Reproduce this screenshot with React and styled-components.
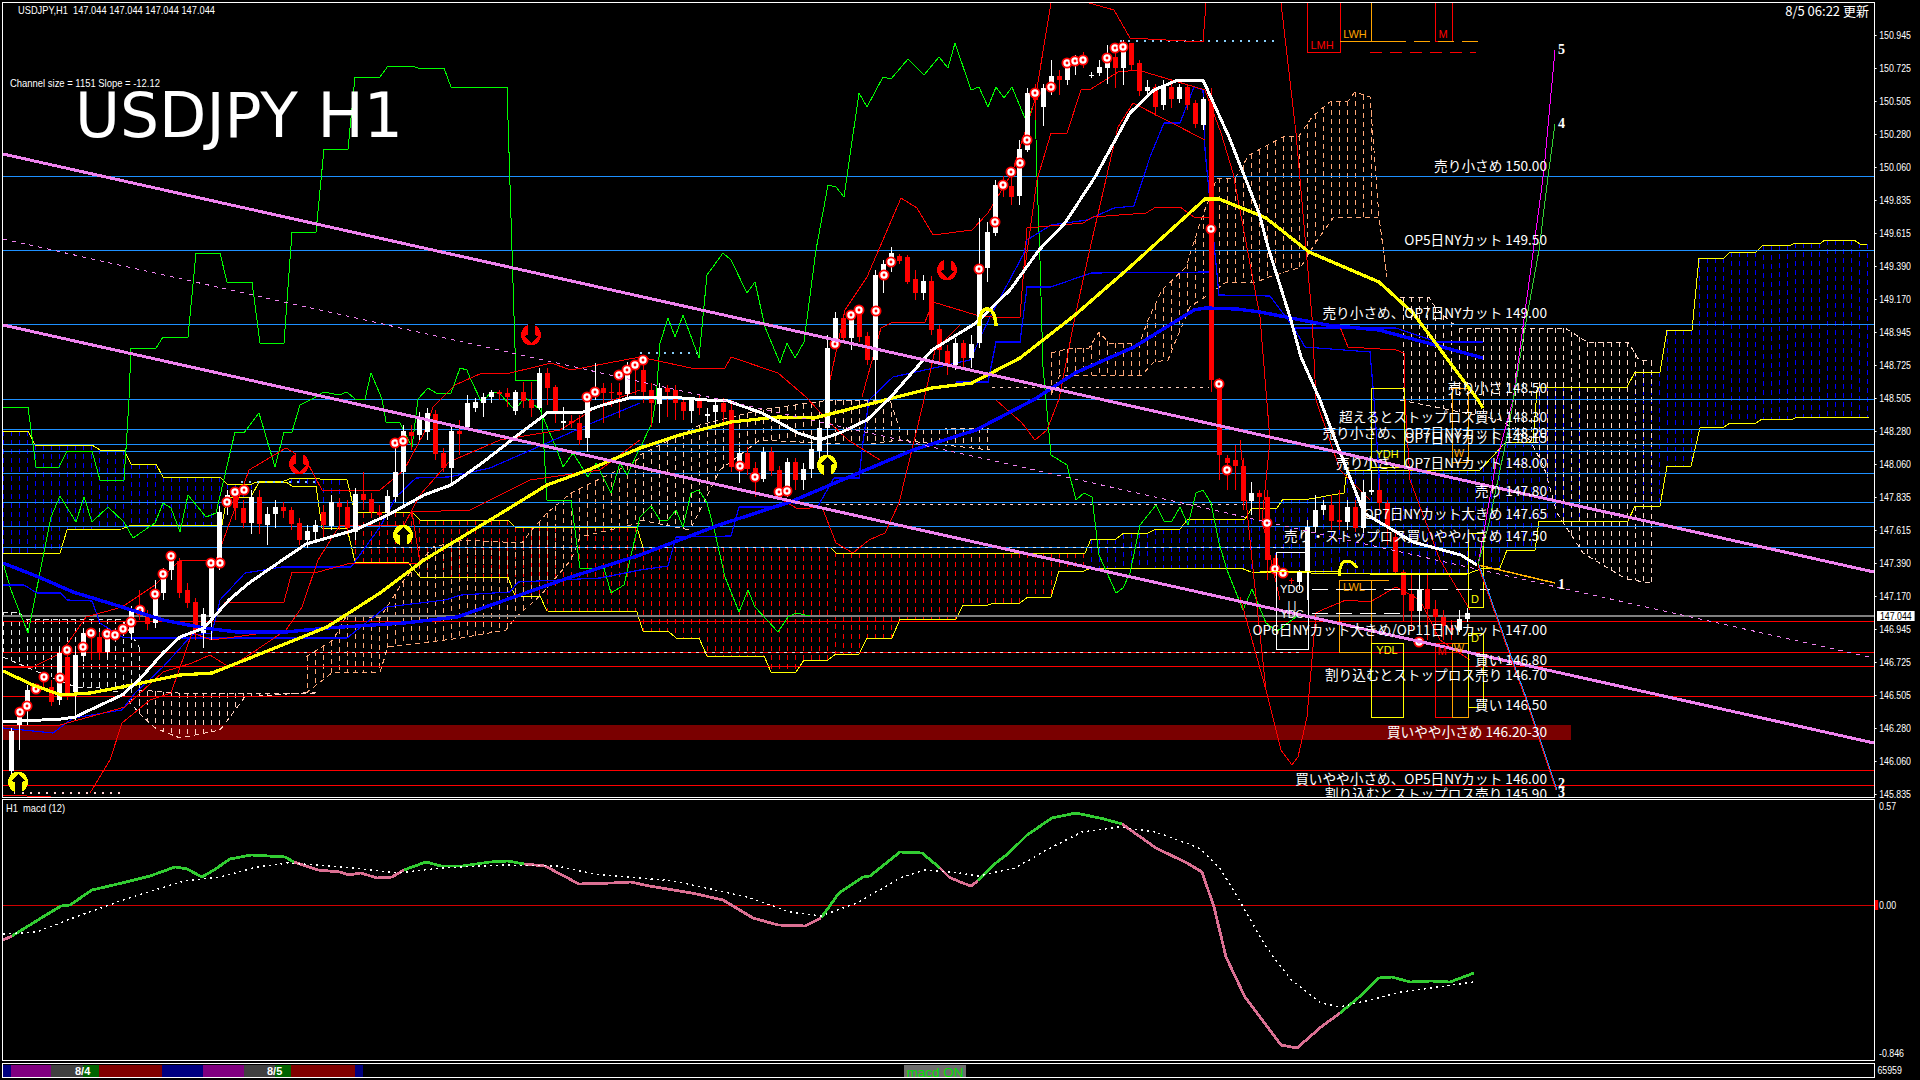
import React from 'react';
import styled, { createGlobalStyle } from 'styled-components';

const GlobalStyle = createGlobalStyle`
  html, body {
    margin: 0;
    padding: 0;
    background: #000;
  }
`;

const UI_FONT = `"Liberation Sans", Arial, sans-serif`;
const JP_FONT = `"Noto Sans CJK JP", "Liberation Sans", sans-serif`;

// price ticks, top to bottom
const TICKS = [
  '150.945', '150.725', '150.505', '150.280', '150.060', '149.835', '149.615', '149.390',
  '149.170', '148.945', '148.725', '148.505', '148.280', '148.060', '147.835', '147.615',
  '147.390', '147.170', '146.945', '146.725', '146.505', '146.280', '146.060', '145.835',
];

const BLUE_LEVELS = [176, 250, 324, 399, 429, 444, 451, 473, 502, 526, 547];
const RED_LEVELS = [621, 652, 666, 696, 770, 785];

const LABELS = [
  [166, '売り小さめ 150.00'],
  [240, 'OP5日NYカット 149.50'],
  [313, '売り小さめ、OP7日NYカット 149.00'],
  [388, '売り小さ 148.50'],
  [417, '超えるとストップロス買い 148.30'],
  [433, '売り小さめ、OP7日NYカット 148.20'],
  [438, 'OP7日NYカット 148.15'],
  [463, '売り小さ、OP7日NYカット 148.00'],
  [491, '売り 147.80'],
  [514, 'OP7日NYカット大きめ 147.65'],
  [536, '売り・ストップロス買いやや小さめ 147.50'],
  [630, 'OP6日NYカット大きめ/OP11日NYカット 147.00'],
  [660, '買い 146.80'],
  [675, '割り込むとストップロス売り 146.70'],
  [705, '買い 146.50'],
  [732, '買いやや小さめ 146.20-30'],
  [779, '買いやや小さめ、OP5日NYカット 146.00'],
  [794, '割り込むとストップロス売り 145.90'],
];

// [w|r, body top, body bottom, wick top, wick bottom], one per bar, 8px apart
const CANDLES = [
  ['w',731,771,728,774],['w',715,725,708,750],['w',690,708,685,725],['w',688,690,685,692],['r',676,679,672,690],
  ['r',687,702,680,706],['w',653,700,648,705],['r',657,693,650,700],['w',655,692,650,720],['w',633,656,628,662],
  ['r',632,636,628,660],['r',637,652,632,660],['w',638,652,633,658],['r',634,636,630,640],['w',627,632,622,636],
  ['w',610,633,606,640],['r',609,612,590,620],['r',617,624,610,630],['w',590,623,580,628],['w',572,593,568,600],
  ['w',560,570,553,580],['r',561,593,558,598],['r',590,603,583,608],['r',602,630,598,640],['w',614,633,608,648],
  ['w',567,617,561,640],['w',512,565,506,570],['w',495,507,490,515],['r',495,508,488,520],['r',508,523,500,528],
  ['w',497,523,490,534],['r',497,524,490,534],['w',514,525,507,545],['w',507,514,500,528],['r',507,511,502,518],
  ['r',510,524,507,530],['r',523,540,518,545],['w',531,540,525,548],['w',525,532,520,540],['r',512,525,505,540],
  ['w',502,526,495,530],['r',503,507,498,530],['r',507,528,500,535],['w',494,532,488,540],['r',494,500,472,510],
  ['r',499,512,493,518],['r',512,515,505,520],['w',496,513,490,520],['w',472,497,445,502],['w',431,472,425,505],
  ['r',432,436,425,450],['w',418,435,412,440],['w',413,432,408,440],['r',414,454,410,460],['r',453,468,448,472],
  ['w',431,468,425,485],['r',431,434,420,455],['w',403,427,395,430],['w',402,408,398,412],['w',397,403,393,417],
  ['w',392,397,390,403],['r',392,394,390,400],['r',393,397,388,407],['w',392,411,390,415],['r',392,401,382,408],
  ['r',400,408,382,417],['w',373,408,368,410],['r',373,388,368,405],['r',387,412,385,423],['w',421,423,407,430],
  ['r',421,423,415,428],['r',423,440,415,445],['w',400,438,393,452],['w',390,395,363,400],['r',388,393,383,423],
  ['r',392,393,383,407],['r',392,395,383,418],['w',370,394,362,398],['r',365,366,365,395],['r',370,392,360,403],
  ['r',390,403,383,427],['w',388,404,383,423],['r',388,392,385,417],['r',390,403,385,420],['r',402,411,398,420],
  ['w',400,411,398,423],['r',400,408,395,415],['w',414,416,408,422],['w',405,412,400,425],['r',403,412,398,425],
  ['r',410,467,400,472],['w',453,463,448,483],['r',453,469,447,475],['r',468,480,462,497],['w',452,479,447,482],
  ['r',452,471,447,476],['r',470,497,466,500],['w',462,488,458,497],['r',462,480,458,490],['w',469,480,463,490],
  ['w',449,469,440,478],['w',428,451,420,470],['w',348,428,335,470],['w',318,340,312,346],['r',318,338,314,342],
  ['w',317,338,312,350],['r',313,337,310,342],['r',336,360,332,365],['w',275,360,270,400],['w',264,272,260,293],
  ['w',253,263,247,272],['r',256,261,254,264],['r',257,282,255,284],['r',279,293,270,300],['w',281,293,275,300],
  ['r',281,330,276,335],['r',329,350,325,365],['r',351,365,345,375],['w',343,365,338,370],['r',343,358,340,368],
  ['w',344,358,335,368],['w',268,343,218,348],['w',232,268,222,282],['w',185,233,180,236],['r',185,188,176,197],
  ['r',186,197,176,205],['w',149,196,140,205],['w',93,150,88,152],['r',90,100,84,120],['w',88,107,84,126],
  ['w',76,90,60,95],['r',76,80,70,95],['w',63,80,60,85],['w',58,65,55,75],['r',58,63,52,68],
  ['w',75,76,72,78],['w',67,73,60,76],['w',58,68,45,84],['r',57,68,50,88],['w',43,68,40,85],
  ['r',43,65,43,70],['r',63,91,60,96],['w',87,91,80,94],['r',87,107,84,116],['w',87,105,80,110],
  ['r',87,99,84,108],['w',87,99,84,103],['r',87,105,84,110],['r',103,124,100,128],['w',99,125,97,130],
  ['r',99,380,88,392],['r',385,455,378,480],['r',458,463,455,490],['r',460,466,445,490],['r',466,501,458,510],
  ['w',493,501,482,515],['r',493,497,490,520],['r',497,560,490,580],['r',558,573,555,576],['r',572,574,568,576],
  ['r',580,581,578,584],['w',572,582,570,590],['w',527,572,520,600],['w',510,527,495,532],['w',505,510,500,515],
  ['r',505,521,495,530],['r',520,522,490,530],['w',507,522,500,530],['r',507,528,500,532],['w',492,528,480,533],
  ['w',490,492,470,495],['r',490,503,478,510],['r',503,527,500,545],['r',537,572,530,575],['r',572,595,570,622],
  ['r',594,611,575,630],['w',589,611,575,625],['r',589,609,575,640],['r',609,617,600,635],['r',617,626,610,640],
  ['r',628,630,620,640],['w',619,630,610,632],['w',613,619,608,622],
];

const RINGS = [
  [20,712],[27,706],[36,689],[44,677],[60,678],[67,650],[83,647],[91,633],[107,634],[115,635],[123,629],[131,622],
  [140,610],[155,594],[163,574],[171,556],[211,563],[220,563],[227,502],[235,492],[244,490],[395,443],[403,441],
  [587,397],[595,392],[619,375],[627,370],[635,365],[643,360],[835,344],[851,315],[859,310],[876,311],[884,275],
  [891,262],[979,269],[995,222],[1003,185],[1011,172],[1020,163],[1027,140],[1035,93],[1051,87],[1067,63],[1075,61],
  [1083,60],[1107,58],[1115,48],[1123,47],[1211,229],[1219,384],[740,466],[755,477],[779,492],[787,491],[1227,470],
  [1267,523],[1275,569],[1283,573],[1419,642],
];

const SPAN_A = [[3,431],[28,431],[35,445],[92,445],[100,450],[124,450],[131,464],[156,464],[163,477],[220,477],[227,484],[252,484],[259,481],[284,481],[292,478],[347,480],[355,513],[412,512],[420,520],[508,520],[515,527],[637,527],[640,538],[643,547],[830,547],[836,553],[1085,553],[1091,539],[1116,539],[1124,533],[1148,533],[1156,529],[1180,529],[1188,519],[1245,519],[1252,508],[1277,508],[1283,499],[1309,499],[1344,493],[1347,470],[1480,470],[1505,443],[1533,442],[1537,390],[1539,387],[1627,387],[1635,372],[1660,372],[1667,330],[1692,330],[1699,258],[1724,258],[1730,252],[1756,252],[1762,246],[1791,245],[1795,243],[1821,243],[1825,240],[1854,240],[1860,244],[1867,244]];
const SPAN_B = [[3,553],[60,553],[67,530],[122,529],[131,525],[222,525],[227,497],[251,497],[259,482],[286,482],[292,486],[316,486],[322,528],[347,528],[355,562],[408,562],[420,577],[508,577],[515,596],[540,596],[547,611],[637,612],[640,622],[643,631],[668,631],[676,638],[699,638],[707,656],[764,656],[771,672],[796,672],[804,660],[828,660],[836,654],[859,654],[867,638],[892,638],[900,619],[956,619],[963,605],[988,605],[994,603],[1020,603],[1028,597],[1051,597],[1059,571],[1084,571],[1091,568],[1241,568],[1251,572],[1370,574],[1467,574],[1483,568],[1500,568],[1507,550],[1535,550],[1539,521],[1628,521],[1635,506],[1660,506],[1667,466],[1691,466],[1700,428],[1724,427],[1730,423],[1756,423],[1762,419],[1793,419],[1797,417],[1869,417]];

// kumo shown as hatching: colour, upper edge, lower edge
const CLOUDS = [
  { color: '#e8e8e8', top: [[3,612],[20,612],[24,619],[122,619],[139,647]], bottom: [[3,657],[33,670],[78,688],[96,687],[122,693],[139,713]] },
  { color: '#ffd0c0', top: [[139,690],[178,693],[316,693]], bottom: [[139,713],[155,728],[180,738],[220,730],[245,697],[316,692]] },
  { color: '#ffa878', top: [[306,657],[333,640],[347,615],[380,618],[404,580],[433,547],[465,540],[522,543],[530,532],[547,513],[571,493],[624,467],[640,458]], bottom: [[306,693],[333,672],[380,672],[388,647],[461,638],[506,630],[516,617],[540,596],[571,560],[580,537],[640,523]] },
  { color: '#ffc8a8', top: [[640,455],[700,425],[760,410],[830,400],[890,400],[900,430],[990,428]], bottom: [[640,520],[690,530],[720,470],[760,440],[860,445],[900,440],[990,450]] },
  { color: '#ffa878', top: [[1051,353],[1071,348],[1089,348],[1099,332],[1109,343],[1140,343],[1148,320],[1162,290],[1186,267],[1201,220],[1217,178],[1235,178],[1249,155],[1283,137],[1299,136],[1312,117],[1331,101],[1348,101],[1355,92],[1370,97],[1379,217],[1387,277]], bottom: [[1051,395],[1060,375],[1142,375],[1154,362],[1168,360],[1178,335],[1190,307],[1211,293],[1225,283],[1257,282],[1266,278],[1301,267],[1316,242],[1333,218],[1379,217],[1387,277]] },
  { color: '#ffd8c8', top: [[1400,297],[1429,297],[1435,307],[1452,323],[1459,328],[1565,328],[1587,342],[1628,342],[1639,360],[1652,361]], bottom: [[1400,400],[1500,420],[1530,440],[1544,467],[1557,513],[1583,553],[1626,579],[1651,583]] },
];

const WHITE_MA = [[3,722],[61,719],[75,717],[122,695],[139,680],[163,653],[180,637],[204,628],[229,600],[249,583],[278,563],[306,544],[355,530],[388,515],[424,495],[451,485],[482,463],[514,438],[547,413],[583,412],[603,405],[633,397],[670,397],[707,400],[725,400],[762,413],[798,433],[820,440],[842,432],[867,420],[889,399],[932,350],[976,323],[1010,290],[1039,250],[1065,223],[1095,177],[1130,113],[1154,90],[1178,80],[1203,80],[1229,137],[1259,213],[1268,247],[1290,317],[1301,357],[1320,400],[1340,452],[1364,513],[1413,542],[1461,555],[1477,565]];
const YELLOW_MA = [[3,671],[33,685],[61,695],[90,693],[122,687],[180,675],[212,673],[245,660],[327,627],[380,593],[424,560],[490,520],[547,485],[588,470],[640,448],[680,435],[731,422],[778,417],[814,418],[846,410],[889,399],[932,388],[972,383],[1020,358],[1075,315],[1130,267],[1205,199],[1219,199],[1259,215],[1266,218],[1309,252],[1379,282],[1413,313],[1478,400],[1483,408]];
const BLUE_MA = [[3,563],[41,578],[73,592],[122,607],[163,620],[204,628],[237,632],[286,632],[327,628],[404,623],[457,617],[514,597],[571,577],[640,555],[719,525],[790,502],[913,450],[976,430],[1035,399],[1075,373],[1134,347],[1194,310],[1205,308],[1237,309],[1260,312],[1327,325],[1379,330],[1435,345],[1483,358]];

const THIN_BLUE = [
  [[3,585],[24,585],[37,593],[61,593],[67,600],[92,601],[100,623],[122,637],[131,638],[212,638]],
  [[3,728],[53,733],[73,718],[122,710],[135,693],[163,667],[192,635],[212,633],[220,600],[245,573],[282,567],[351,567],[380,527],[396,497],[416,478],[449,477],[490,468],[547,443],[592,423],[616,413],[640,403]],
  [[212,638],[347,638],[386,607],[445,600],[461,595],[510,592],[518,582],[600,578],[640,570],[668,566],[676,537],[731,536],[739,507],[770,507],[786,502],[818,506],[834,478],[859,478],[863,442],[869,400],[893,377],[970,360],[990,317],[1024,253],[1027,240],[1051,225],[1087,220],[1114,208],[1134,206],[1150,157],[1164,123],[1180,123],[1194,87],[1203,90],[1205,150],[1219,295],[1270,296],[1294,328],[1396,328],[1437,342],[1483,342]],
  [[956,382],[988,382],[996,342],[1020,342],[1027,287],[1051,287],[1091,273],[1211,272]],
  [[1294,328],[1305,347],[1370,352],[1374,399],[1379,473],[1379,500]],
];

const THIN_RED = [
  [[3,667],[33,667],[61,653],[86,617],[122,607],[155,585],[180,560],[216,560],[249,470],[286,448],[306,460],[322,490],[380,490],[404,470],[424,433],[433,407],[455,385],[482,373],[506,374],[535,367],[551,363],[571,370],[640,357],[691,368],[725,368],[731,357],[778,373],[806,397],[830,423],[848,440],[880,460]],
  [[826,399],[845,310],[867,277],[901,198],[917,208],[933,235],[972,230],[988,213],[1012,173],[1035,100],[1051,3]],
  [[1089,3],[1114,10],[1130,38],[1166,40],[1203,42],[1206,3]],
  [[90,793],[110,760],[122,723],[150,700],[171,693],[192,633],[212,640],[286,630],[302,607],[318,560],[340,525],[404,525],[420,495],[449,462],[500,440],[560,430],[600,405],[640,390]],
  [[3,795],[51,797]],
  [[3,725],[60,725],[125,707],[163,672],[192,663],[210,655],[229,667],[249,655],[286,630]],
  [[224,602],[284,602],[292,572],[318,572],[351,563],[420,563],[412,512],[470,510],[530,480],[600,470],[640,440]],
  [[862,397],[881,328],[893,322],[925,322],[933,302],[976,315],[992,317],[1020,317],[1027,228],[1083,223],[1093,217],[1146,213],[1156,207],[1180,207],[1194,217],[1211,217]],
  [[1025,267],[1037,180],[1051,133],[1067,133],[1081,90],[1091,89],[1118,72],[1138,70],[1205,90],[1221,133],[1233,173],[1260,317],[1270,440],[1262,520],[1280,600]],
  [[782,500],[798,509],[822,507],[836,543],[853,553],[869,540],[885,533],[899,503],[924,400],[935,350],[960,325]],
  [[996,400],[1022,423],[1035,440],[1047,430],[1059,399],[1075,317],[1089,253],[1118,127],[1133,103],[1205,140]],
  [[1281,3],[1296,133],[1312,317],[1316,400],[1340,470],[1370,500]],
  [[1240,597],[1266,690],[1281,750],[1292,765],[1298,757],[1307,717],[1316,613],[1322,610],[1346,600],[1370,602],[1396,587],[1420,600],[1440,640],[1470,660]],
  [[1240,440],[1252,560],[1266,690]],
  [[1340,327],[1348,347],[1396,350],[1404,353],[1405,399],[1410,480],[1440,560],[1470,610]],
];

const STEP_GREEN = [[3,407],[28,407],[36,467],[59,467],[67,451],[92,451],[100,480],[124,480],[127,433],[129,399],[131,348],[156,348],[163,337],[188,337],[196,253],[220,253],[227,282],[252,282],[260,343],[284,343],[292,232],[316,232],[324,149],[348,149],[355,77],[380,77],[388,66],[412,66],[418,68],[444,68],[451,87],[507,87],[516,380],[540,380],[547,500],[571,500],[580,568],[604,568],[611,593],[624,585],[640,517],[651,506],[660,520],[668,520],[676,510],[683,527],[691,493],[699,490],[707,503],[715,533],[725,577],[739,612],[748,590],[755,607],[778,632],[788,617],[796,613],[810,616]];
const WAVE_GREEN = [[3,563],[11,590],[28,633],[51,517],[60,496],[76,522],[84,497],[92,522],[108,507],[124,522],[133,538],[155,523],[163,503],[171,508],[180,532],[188,495],[206,517],[216,513],[235,432],[244,433],[259,413],[275,467],[284,432],[292,432],[300,405],[312,399],[324,392],[339,395],[347,392],[355,399],[365,399],[371,373],[382,399],[386,422],[400,423],[412,447],[418,399],[428,388],[436,393],[451,393],[460,368],[467,370],[470,378],[482,403],[491,392],[498,392],[515,410],[525,397],[540,410],[557,450],[563,467],[573,453],[588,477],[596,463],[611,493],[620,463],[627,475],[640,448],[652,423],[656,399],[660,343],[668,318],[675,337],[683,315],[699,358],[707,275],[723,253],[731,260],[747,293],[755,282],[765,327],[780,363],[787,343],[795,358],[804,342],[816,250],[828,185],[836,187],[844,197],[859,93],[867,107],[883,77],[891,79],[908,59],[924,75],[939,57],[948,68],[955,43],[971,90],[979,87],[988,107],[996,87],[1004,98],[1012,87],[1027,123],[1035,100],[1037,177],[1040,260],[1043,367],[1046,400],[1051,455],[1067,465],[1076,500],[1084,493],[1092,497],[1099,555],[1116,593],[1123,588],[1130,573],[1140,525],[1156,505],[1164,521],[1172,521],[1180,507],[1188,525],[1196,493],[1203,490],[1211,503],[1219,543],[1227,570],[1243,610],[1252,589],[1266,623],[1277,631],[1292,620],[1297,616]];

const MACD_PINK = [
  [[3,940],[12,936]],
  [[294,862],[318,870],[340,872],[349,875],[361,873],[377,878],[392,877],[404,870]],
  [[524,864],[545,866],[579,884],[612,883],[631,882],[649,886],[692,893],[723,900],[753,918],[778,925],[805,926],[821,918]],
  [[940,868],[949,877],[960,882],[971,886],[978,881]],
  [[1122,824],[1156,848],[1187,863],[1202,872],[1214,907],[1226,957],[1245,997],[1260,1017],[1281,1045],[1297,1048],[1321,1027],[1340,1013]],
];
const MACD_GREEN = [
  [[12,936],[46,915],[61,906],[70,905],[92,890],[122,883],[150,876],[175,867],[187,869],[202,877],[214,870],[230,859],[251,855],[285,857],[294,862]],
  [[404,870],[426,862],[441,866],[462,866],[490,862],[508,861],[524,864]],
  [[821,918],[839,893],[863,877],[870,876],[900,852],[922,853],[940,868]],
  [[978,881],[997,862],[1009,853],[1027,835],[1052,818],[1076,813],[1104,819],[1122,824]],
  [[1340,1013],[1358,998],[1379,978],[1392,977],[1410,982],[1431,981],[1450,982],[1474,973]],
];
const MACD_SIGNAL = [[3,934],[37,932],[73,918],[129,898],[184,881],[220,877],[257,867],[288,863],[343,867],[398,873],[441,868],[502,865],[557,866],[594,874],[674,881],[747,897],[790,912],[821,916],[857,903],[900,878],[925,870],[960,873],[978,876],[1015,868],[1052,847],[1082,832],[1119,827],[1156,832],[1199,848],[1220,868],[1242,905],[1266,947],[1291,980],[1321,1003],[1340,1007],[1370,1000],[1401,992],[1438,987],[1474,982]];

// colour, width, date text and where the text starts
const STRIP = [
  ['#000080', 8], ['#800080', 40], ['#404040', 32, '8/4', 24], ['#006400', 16], ['#800000', 63], ['#000080', 41],
  ['#800080', 41], ['#404040', 31, '8/5', 23], ['#006400', 16], ['#800000', 64], ['#000080', 8],
];

const points = (line) => line.map((p) => p.join(',')).join(' ');

const yAt = (line, x) => {
  for (let i = 1; i < line.length; i++) {
    const [x0, y0] = line[i - 1];
    const [x1, y1] = line[i];
    if (x >= x0 && x <= x1) return x1 === x0 ? y0 : y0 + ((x - x0) * (y1 - y0)) / (x1 - x0);
  }
  return null;
};

function Hatch({ top, bottom, color, from = 3, to = 1872 }) {
  const bars = [];
  for (let x = 3; x <= to; x += 8) {
    if (x < from) continue;
    const a = yAt(top, x);
    const b = yAt(bottom, x);
    if (a !== null && b !== null && b > a) {
      bars.push(<line key={x} x1={x} x2={x} y1={a} y2={b} stroke={color} strokeDasharray="5 4" />);
    }
  }
  return <g>{bars}</g>;
}

function Candle({ candle, index }) {
  const [kind, top, bottom, wickTop, wickBottom] = candle;
  const x = 11 + index * 8;
  const color = kind === 'w' ? '#fff' : '#f00';
  return (
    <g>
      <line x1={x} x2={x} y1={wickTop} y2={wickBottom} stroke={color} />
      <rect x={x - 2} y={top} width={5} height={Math.max(bottom - top, 1)} fill={color} />
    </g>
  );
}

function Ring({ x, y }) {
  return (
    <RingMark>
      <circle cx={x} cy={y} r={4.6} fill="#fff" stroke="#f00" strokeWidth={1.8} />
      <circle cx={x} cy={y} r={1.4} fill="#f00" />
    </RingMark>
  );
}

// Wingdings style arrow: filled oval with the arrow cut out in black
function BigArrow({ x, y, color, down }) {
  const s = down ? -1 : 1;
  const cut = [[0,-8],[7,-1],[3.5,0],[3.5,12],[-3.5,12],[-3.5,0],[-7,-1]]
    .map(([dx, dy]) => `${x + dx},${y + dy * s}`)
    .join(' ');
  return (
    <g>
      <ellipse cx={x} cy={y} rx={10} ry={10.5} fill={color} />
      <polygon points={cut} fill="#000" />
    </g>
  );
}

function Box({ x, y, w, h, color }) {
  return <rect x={x} y={y} width={w} height={h} fill="none" stroke={color} />;
}

function Levels() {
  return (
    <g>
      {BLUE_LEVELS.map((y) => (
        <line key={y} x1={3} x2={1874} y1={y} y2={y} stroke="#1e90ff" />
      ))}
      {RED_LEVELS.map((y) => (
        <line key={y} x1={3} x2={1874} y1={y} y2={y} stroke="#f00" />
      ))}
      <line x1={3} x2={1874} y1={616} y2={616} stroke="#808080" strokeWidth={2} />
      <line x1={192} x2={1300} y1={652} y2={652} stroke="#fff" strokeDasharray="3 5" opacity={0.8} />
      <line x1={353} x2={1290} y1={547} y2={547} stroke="#fff" strokeDasharray="3 5" opacity={0.8} />
      <line x1={826} x2={1249} y1={504} y2={504} stroke="#ffd0d0" strokeDasharray="3 5" />
      <line x1={992} x2={1209} y1={387} y2={387} stroke="#ffd0c0" strokeDasharray="3 5" />
      <line x1={14} x2={122} y1={793} y2={793} stroke="#ffd0d0" strokeDasharray="2 6" strokeWidth={2} />
      <line x1={241} x2={315} y1={482} y2={482} stroke="#87cefa" strokeDasharray="2 6" strokeWidth={2} />
      <line x1={640} x2={700} y1={353} y2={353} stroke="#87cefa" strokeDasharray="2 6" strokeWidth={2} />
      <line x1={1120} x2={1275} y1={41} y2={41} stroke="#87cefa" strokeDasharray="2 6" strokeWidth={2} />
    </g>
  );
}

function Kumo() {
  return (
    <g>
      <Hatch top={SPAN_A} bottom={SPAN_B} color="#0000ff" to={345} />
      <Hatch top={SPAN_A} bottom={SPAN_B} color="#f00" from={355} to={1085} />
      <Hatch top={SPAN_A} bottom={SPAN_B} color="#0000ff" from={1091} />
      {CLOUDS.map((cloud, i) => (
        <g key={i}>
          <Hatch top={cloud.top} bottom={cloud.bottom} color={cloud.color} />
          <polyline points={points(cloud.top)} fill="none" stroke={cloud.color} strokeDasharray="5 4" />
          <polyline points={points(cloud.bottom)} fill="none" stroke={cloud.color} strokeDasharray="5 4" />
        </g>
      ))}
      <polyline points={points(SPAN_A)} fill="none" stroke="#ff0" />
      <polyline points={points(SPAN_B)} fill="none" stroke="#ff0" />
    </g>
  );
}

function PivotBoxes() {
  return (
    <g>
      <Box x={1276} y={552} w={32} h={97} color="#fff" />
      <Box x={1339} y={580} w={32} h={72} color="#ffa500" />
      <line x1={1371} x2={1389} y1={580} y2={580} stroke="#ffa500" />
      <Box x={1371} y={643} w={32} h={74} color="#ff0" />
      <Box x={1435} y={643} w={17} h={74} color="#f00" />
      <Box x={1452} y={643} w={16} h={74} color="#ffa500" />
      <Box x={1468} y={533} w={15} h={74} color="#ff0" />
      <Box x={1468} y={633} w={15} h={74} color="#ff0" />
      <Box x={1371} y={388} w={33} h={79} color="#ff0" />
      <Box x={1452} y={388} w={16} h={74} color="#ffa500" />
      <Box x={1307} y={0} w={33} h={52} color="#f00" />
      <Box x={1435} y={0} w={17} h={41} color="#f00" />
      <line x1={1371} x2={1371} y1={3} y2={41} stroke="#ffa500" />
      <line x1={1340} x2={1390} y1={41} y2={41} stroke="#ffa500" />
      <line x1={1390} x2={1483} y1={41} y2={41} stroke="#ffa500" strokeDasharray="16 8" />
      <line x1={1370} x2={1476} y1={52} y2={52} stroke="#f00" strokeDasharray="12 8" />
      <line x1={1312} x2={1490} y1={589} y2={589} stroke="#fff" strokeDasharray="16 8" />
      <line x1={1312} x2={1400} y1={613} y2={613} stroke="#fff" strokeDasharray="16 8" />
      <line x1={1260} x2={1340} y1={571} y2={571} stroke="#ff0" />
      <line x1={1370} x2={1467} y1={574} y2={574} stroke="#ff0" strokeWidth={1.5} />
    </g>
  );
}

function Projections() {
  return (
    <g>
      <polyline points={points([[1478,565],[1496,463],[1513,400],[1533,253],[1544,170],[1555,50]])} fill="none" stroke="#ff00ff" />
      <polyline points={points([[1478,565],[1489,523],[1509,427],[1524,333],[1539,250],[1548,177],[1555,124]])} fill="none" stroke="#32cd32" />
      <polyline points={points([[1478,565],[1500,570],[1555,583]])} fill="none" stroke="#ffb000" strokeWidth={1.5} />
      <polyline points={points([[1478,565],[1509,653],[1526,700],[1556,790]])} fill="none" stroke="#f00" />
      <polyline points={points([[1479,565],[1510,653],[1527,700],[1557,790]])} fill="none" stroke="#1e90ff" />
      <NumberMark x={1558} y={54}>5</NumberMark>
      <NumberMark x={1558} y={128}>4</NumberMark>
      <NumberMark x={1558} y={589}>1</NumberMark>
      <NumberMark x={1558} y={788}>2</NumberMark>
      <NumberMark x={1558} y={797}>3</NumberMark>
    </g>
  );
}

function MainChart() {
  return (
    <ChartSvg width={1871} height={794} viewBox="3 3 1871 794">
      <rect x={3} y={725} width={1568} height={15} fill="#7a0000" />
      <Kumo />
      <Levels />
      <polyline points={points(STEP_GREEN)} fill="none" stroke="#0f0" />
      <polyline points={points(WAVE_GREEN)} fill="none" stroke="#0f0" />
      {THIN_BLUE.map((line, i) => (
        <polyline key={i} points={points(line)} fill="none" stroke="#0000ff" strokeWidth={1.2} />
      ))}
      {THIN_RED.map((line, i) => (
        <polyline key={i} points={points(line)} fill="none" stroke="#f00" />
      ))}
      {CANDLES.map((candle, i) => (
        <Candle key={i} candle={candle} index={i} />
      ))}
      {RINGS.map(([x, y]) => (
        <Ring key={`${x}-${y}`} x={x} y={y} />
      ))}
      <PivotBoxes />
      <polyline points={points(BLUE_MA)} fill="none" stroke="#0000ff" strokeWidth={3.4} />
      <polyline points={points(YELLOW_MA)} fill="none" stroke="#ff0" strokeWidth={3.2} />
      <polyline points={points(WHITE_MA)} fill="none" stroke="#fff" strokeWidth={3} />
      <line x1={3} y1={154} x2={1874} y2={572} stroke="#ee82ee" strokeWidth={3} />
      <line x1={3} y1={325} x2={1874} y2={743} stroke="#ee82ee" strokeWidth={3} />
      <line x1={3} y1={239} x2={1874} y2={658} stroke="#ee82ee" strokeDasharray="4 5" />
      <Projections />
      <BigArrow x={531} y={335} color="#f00" down />
      <BigArrow x={299} y={464} color="#f00" down />
      <BigArrow x={947} y={270} color="#f00" down />
      <BigArrow x={18} y={782} color="#ff0" />
      <BigArrow x={403} y={535} color="#ff0" />
      <BigArrow x={827} y={465} color="#ff0" />
      <path d="M979,326 Q980,309 987,309 Q995,309 996,326" fill="none" stroke="#ff0" strokeWidth={3.5} />
      <path d="M1339,576 Q1340,561 1347,561 Q1353,561 1357,568" fill="none" stroke="#ff0" strokeWidth={3} />
      <Legend x={18} y={14} textLength={197} lengthAdjust="spacingAndGlyphs">USDJPY,H1 &nbsp;147.044 147.044 147.044 147.044</Legend>
      <Legend x={10} y={87} textLength={150} lengthAdjust="spacingAndGlyphs">Channel size = 1151 Slope = -12.12</Legend>
      <Title x={75} y={137}>USDJPY H1</Title>
      <Updated x={1869} y={16}>8/5 06:22 更新</Updated>
      <Tag x={1322} y={49} $color="#f00">LMH</Tag>
      <Tag x={1355} y={38} $color="#ffa500">LWH</Tag>
      <Tag x={1443} y={38} $color="#f00">M</Tag>
      <Tag x={1387} y={458} $color="#ff0">YDH</Tag>
      <Tag x={1459} y={457} $color="#ffa500">W</Tag>
      <Tag x={1292} y={593} $color="#fff">YDO</Tag>
      <Tag x={1292} y={609} $color="#fff">| |</Tag>
      <Tag x={1292} y={618} $color="#fff">YDC</Tag>
      <Tag x={1354} y={591} $color="#ffa500">LWL</Tag>
      <Tag x={1387} y={654} $color="#ff0">YDL</Tag>
      <Tag x={1442} y={655} $color="#f00">M</Tag>
      <Tag x={1459} y={652} $color="#ffa500">W</Tag>
      <Tag x={1475} y={603} $color="#ff0">D</Tag>
      <Tag x={1475} y={642} $color="#ff0">D</Tag>
      {LABELS.map(([y, text]) => (
        <LevelLabel key={text} x={1547} y={y + 5}>
          {text}
        </LevelLabel>
      ))}
    </ChartSvg>
  );
}

function MacdChart() {
  return (
    <ChartSvg width={1871} height={260} viewBox="3 800 1871 260">
      <line x1={3} x2={1874} y1={905} y2={905} stroke="#d00000" />
      {MACD_GREEN.map((line, i) => (
        <polyline key={i} points={points(line)} fill="none" stroke="#32cd32" strokeWidth={2.8} />
      ))}
      {MACD_PINK.map((line, i) => (
        <polyline key={i} points={points(line)} fill="none" stroke="#db7093" strokeWidth={2.8} />
      ))}
      <polyline points={points(MACD_SIGNAL)} fill="none" stroke="#fff" strokeDasharray="2 4" strokeWidth={1.4} />
      <Legend x={6} y={812} textLength={59} lengthAdjust="spacingAndGlyphs">H1 &nbsp;macd (12)</Legend>
    </ChartSvg>
  );
}

export default function App() {
  return (
    <>
      <GlobalStyle />
      <Terminal>
        <ChartPane>
          <MainChart />
        </ChartPane>
        <PriceAxis>
          {TICKS.map((tick) => (
            <PriceTick key={tick}>{tick}</PriceTick>
          ))}
          <CurrentPrice>147.044</CurrentPrice>
        </PriceAxis>
        <ChartPane>
          <MacdChart />
        </ChartPane>
        <MacdAxis>
          <MacdTick $top={0}>0.57</MacdTick>
          <MacdTick $top={85} $mark>0.00</MacdTick>
          <MacdTick $top={134}>-0.846</MacdTick>
        </MacdAxis>
        <TimeStrip>
          {STRIP.map(([color, width, text, inset], i) => (
            <StripSegment key={i} $color={color} $width={width} $inset={inset}>
              {text}
            </StripSegment>
          ))}
          <StripSpacer />
          <IndicatorButton>macd ON</IndicatorButton>
        </TimeStrip>
        <StripCount>65959</StripCount>
      </Terminal>
    </>
  );
}

const Terminal = styled.div`
  width: 1920px;
  height: 1080px;
  box-sizing: border-box;
  padding: 2px 0 0 2px;
  background: #000;
  display: grid;
  grid-template-columns: 1873px 45px;
  grid-template-rows: 796px 262px 15px;
  row-gap: 1px;
  overflow: hidden;
  font-family: ${UI_FONT};
  color: #fff;
`;

const ChartPane = styled.div`
  position: relative;
  border: 1px solid #fff;
  overflow: hidden;
  background: #000;
`;

const ChartSvg = styled.svg`
  display: block;
  shape-rendering: crispEdges;
`;

const RingMark = styled.g`
  shape-rendering: auto;
`;

const AxisText = styled.div`
  font-size: 11px;
  transform: scaleX(0.8);
  transform-origin: left center;
  white-space: nowrap;
`;

const PriceAxis = styled.div`
  position: relative;
  display: flex;
  flex-direction: column;
  padding-top: 16.5px;
`;

const PriceTick = styled(AxisText)`
  height: 33px;
  flex: none;
  display: flex;
  align-items: center;
  gap: 3px;
  &::before {
    content: '';
    width: 4px;
    height: 1px;
    background: #fff;
  }
`;

const CurrentPrice = styled(AxisText)`
  position: absolute;
  left: 2px;
  top: 609px;
  width: 47px;
  height: 10px;
  line-height: 10px;
  background: #fff;
  color: #000;
  text-align: center;
`;

const MacdAxis = styled.div`
  display: flex;
  flex-direction: column;
`;

const MacdTick = styled(AxisText)`
  position: relative;
  height: 14px;
  line-height: 14px;
  padding-left: 5px;
  margin-top: ${(p) => p.$top}px;
  ${(p) =>
    p.$mark &&
    `
    &::before {
      content: '';
      position: absolute;
      left: 0;
      top: 2px;
      width: 4px;
      height: 10px;
      background: #f00;
    }
  `}
`;

const TimeStrip = styled.div`
  display: flex;
  align-items: stretch;
  box-sizing: border-box;
  height: 15px;
  margin-top: 1px;
  padding-top: 1px;
  border: 1px solid #fff;
  overflow: hidden;
`;

const StripSegment = styled.div`
  flex: none;
  box-sizing: border-box;
  width: ${(p) => p.$width}px;
  padding-left: ${(p) => p.$inset || 0}px;
  background: ${(p) => p.$color};
  z-index: ${(p) => (p.$inset ? 1 : 0)};
  font-size: 11px;
  font-weight: 700;
  line-height: 13px;
  white-space: nowrap;
`;

const StripSpacer = styled.div`
  flex: none;
  width: 541px;
`;

const IndicatorButton = styled.div`
  flex: none;
  width: 62px;
  background: #6e6e6e;
  color: #00e000;
  font-size: 13.5px;
  line-height: 15px;
  text-align: center;
  white-space: nowrap;
  overflow: hidden;
`;

const StripCount = styled(AxisText)`
  padding-left: 3px;
  margin-top: 1px;
  line-height: 14px;
`;

const Legend = styled.text`
  font-family: ${UI_FONT};
  font-size: 11px;
  fill: #fff;
`;

const Title = styled.text`
  font-family: "DejaVu Sans", Verdana, sans-serif;
  font-size: 61.5px;
  fill: #fff;
`;

const Updated = styled.text`
  font-family: ${JP_FONT};
  font-size: 13px;
  text-anchor: end;
  fill: #fff;
`;

const LevelLabel = styled.text`
  font-family: ${JP_FONT};
  font-size: 13.65px;
  text-anchor: end;
  fill: #fff;
`;

const NumberMark = styled.text`
  font-family: "Liberation Serif", serif;
  font-size: 14px;
  font-weight: 700;
  fill: #fff;
`;

const Tag = styled.text`
  font-family: ${UI_FONT};
  font-size: 11px;
  text-anchor: middle;
  fill: ${(p) => p.$color};
`;
